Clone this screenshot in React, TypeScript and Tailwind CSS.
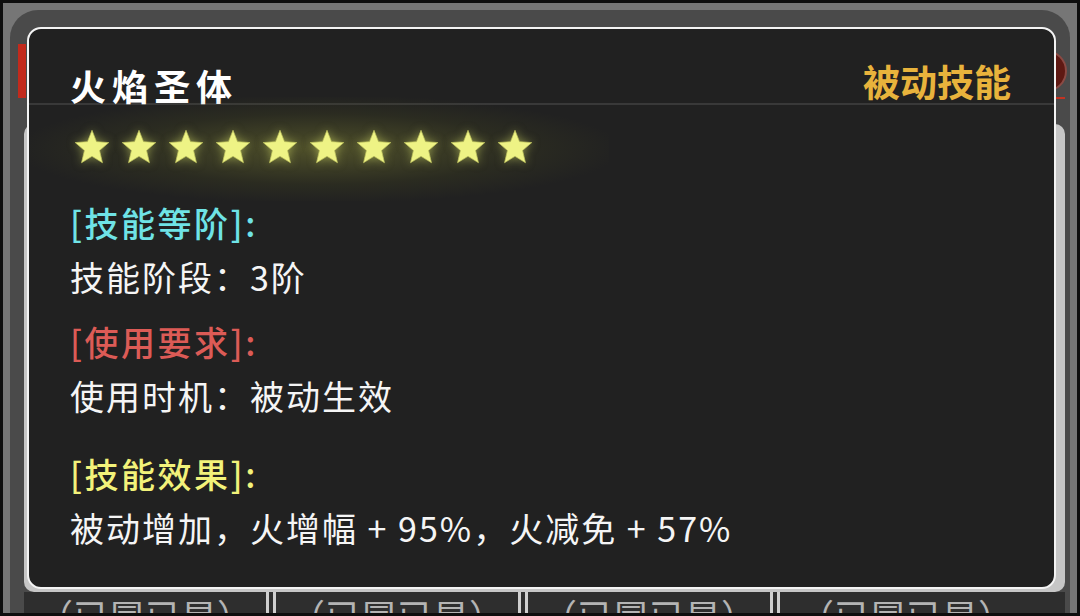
import React from "react";

const STARS = Array.from({ length: 10 }, (_, i) => i);

function Star() {
  return (
    <svg
      viewBox="0 0 24 24"
      className="h-[37px] w-[38px] drop-shadow-[0_0_5px_rgba(225,235,110,0.5)]"
    >
      <polygon
        points="12,0.8 14.9,8.2 22.9,8.8 16.9,13.9 18.8,21.9 12,17.7 5.2,21.9 7.1,13.9 1.1,8.8 9.1,8.2"
        fill="#eef385"
        stroke="#bfc45e"
        strokeWidth="0.45"
        strokeLinejoin="round"
      />
    </svg>
  );
}

function Section({
  label,
  color,
  value,
  className,
}: {
  label: string;
  color: string;
  value: string;
  className?: string;
}) {
  return (
    <div className={className}>
      <div className={`text-[34px] font-medium leading-[54px] tracking-[2.5px] ${color}`}>{label}</div>
      <div className="text-[34px] leading-[54px] tracking-[2px] text-[#f5f5f5]">{value}</div>
    </div>
  );
}

const FOOTER_CELLS = ["（已冒已是）", "（已冒已是）", "（已冒已是）", "（已冒已是）"];

export default function App() {
  return (
    <div className="relative h-[616px] w-[1080px] overflow-hidden bg-[#0e0e0e] p-[3px] font-['Noto_Sans_CJK_SC','Noto_Sans',sans-serif]">
      {/* game window behind the tooltip */}
      <div className="h-full bg-[#767676] px-[7px] pt-[7px]">
        <div className="flex h-full flex-col overflow-hidden rounded-t-[28px] bg-[#4a4a4a] pl-[8px] pr-[5px]">
          {/* window title bar */}
          <div className="mt-[33px] flex h-[56px] shrink-0 items-center justify-between">
            <div className="h-[54px] w-[8px] bg-[#c22a1c]" />
            <div className="relative mr-[-2px] h-[42px] w-[42px] rounded-full border-2 border-[#8a4a44] bg-[#5e1913]">
              <div className="absolute -bottom-[9px] right-0 h-[2px] w-[40px] bg-[#c23322]" />
            </div>
          </div>
          {/* light content area */}
          <div className="ml-[6px] mt-[25px] h-[468px] shrink-0 rounded-[10px] bg-[#c6c6c6]" />
          {/* list row peeking out under the tooltip */}
          <div className="ml-[6px] flex min-h-0 flex-1 overflow-hidden bg-[#2e2e2e]">
            {FOOTER_CELLS.map((t, i) => (
              <div
                key={i}
                className="flex w-[252px] justify-center border-r-[10px] border-double border-[#cfcfcf] pt-[1px] text-[36px] leading-[44px] text-[#b4b4b4] last:border-r-0"
              >
                {t}
              </div>
            ))}
          </div>
        </div>
      </div>

      {/* skill tooltip */}
      <div className="absolute left-[27px] top-[27px] flex h-[562px] w-[1029px] flex-col rounded-[14px] border-2 border-[#f4f4f4] bg-[#212121] text-white">
        <div className="flex h-[76px] items-end justify-between border-b-2 border-[#393939] pl-[41px] pr-[43px]">
          <span className="text-[36px] font-bold leading-[36px] tracking-[6px]">火焰圣体</span>
          <span className="mb-[3px] text-[37px] font-semibold leading-[37px] text-[#e8b33c]">被动技能</span>
        </div>

        <div className="relative mt-[24px] h-[37px] pl-[44px]">
          <div className="pointer-events-none absolute left-[0px] top-[-32px] h-[104px] w-[580px] bg-[radial-gradient(ellipse_at_center,rgba(110,112,48,0.6),rgba(66,68,32,0.3)_48%,transparent_74%)]" />
          <div className="relative flex gap-[9px]">
            {STARS.map((i) => (
              <Star key={i} />
            ))}
          </div>
        </div>

        <div className="flex flex-col pl-[41px]">
          <Section
            className="mt-[30px]"
            label="[技能等阶]:"
            color="text-[#6fe3e6]"
            value="技能阶段：3阶"
          />
          <Section
            className="mt-[11px]"
            label="[使用要求]:"
            color="text-[#dc5b56]"
            value="使用时机：被动生效"
          />
          <Section
            className="mt-[24px]"
            label="[技能效果]:"
            color="text-[#f2f27a]"
            value="被动增加，火增幅 + 95%，火减免 + 57%"
          />
        </div>
      </div>
    </div>
  );
}
